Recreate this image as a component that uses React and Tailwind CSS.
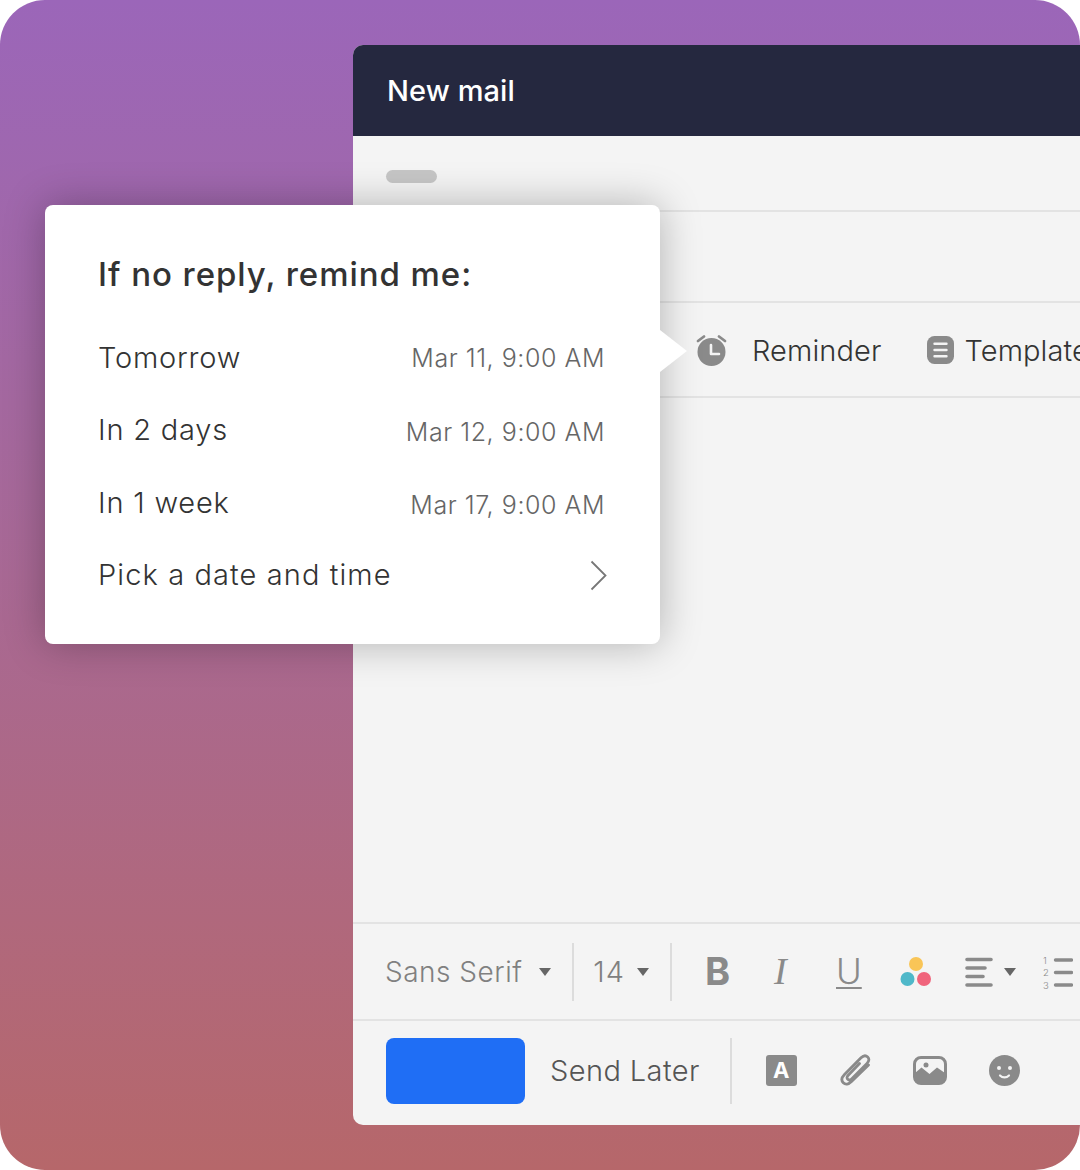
const font = { fontFamily: 'Inter, sans-serif' };

function Caret({ className = '' }) {
    return <span className={`block shrink-0 w-0 h-0 border-x-[6px] border-x-transparent border-t-[8px] border-t-[#666] ${className}`} />;
}

function ReminderRow({ label, date, dateClass = '' }) {
    return (
        <div className="flex items-center justify-between h-[72.5px]">
            <span className="text-[29px] font-light text-[#333] tracking-[0.8px]">{label}</span>
            <span className={`text-[25px] font-light text-[#666] tracking-[0.55px] ${dateClass}`}>{date}</span>
        </div>
    );
}

function AlarmIcon() {
    return (
        <svg width="32" height="32" viewBox="0 0 32 32" className="shrink-0">
            <circle cx="15.500" cy="18" r="14" fill="#8a8a8a" />
            <path d="M15 11v9h8" fill="none" stroke="#f4f4f4" strokeWidth="2.600" strokeLinecap="round" strokeLinejoin="round" />
            <path d="M2 7l6-4.500M29 7l-6-4.500" fill="none" stroke="#8a8a8a" strokeWidth="2.800" strokeLinecap="round" />
        </svg>
    );
}

function TemplateIcon() {
    return (
        <svg width="27" height="28" viewBox="0 0 27 28" className="shrink-0">
            <rect x="0" y="0" width="27" height="28" rx="7.500" fill="#8a8a8a" />
            <path d="M7.500 7.700h12M7.500 14h12M7.500 20.300h12" stroke="#f4f4f4" strokeWidth="2.400" strokeLinecap="round" />
        </svg>
    );
}

function ColorDots() {
    return (
        <svg width="32" height="30" viewBox="0 0 32 30" className="shrink-0">
            <circle cx="16" cy="7" r="7" fill="#f9c557" />
            <circle cx="7.500" cy="22" r="7" fill="#4fb8c9" />
            <circle cx="24" cy="22" r="7" fill="#f0647c" />
        </svg>
    );
}

function AlignIcon() {
    return (
        <svg width="28" height="30" viewBox="0 0 28 30" className="shrink-0">
            <path d="M2 2.500h24M2 11h18M2 19.500h16M2 28h24" stroke="#8a8a8a" strokeWidth="3.600" strokeLinecap="round" />
        </svg>
    );
}

function ListIcon() {
    return (
        <svg width="30" height="34" viewBox="0 0 30 34" className="shrink-0">
            <path d="M12.500 5h16M12.500 17.500h16M12.500 30h16" stroke="#8a8a8a" strokeWidth="3.400" strokeLinecap="round" />
            <text x="0" y="8.500" fontSize="9.500" fontWeight="300" fill="#8a8a8a" fontFamily="Inter, sans-serif">1</text>
            <text x="0" y="21" fontSize="9.500" fontWeight="300" fill="#8a8a8a" fontFamily="Inter, sans-serif">2</text>
            <text x="0" y="33.500" fontSize="9.500" fontWeight="300" fill="#8a8a8a" fontFamily="Inter, sans-serif">3</text>
        </svg>
    );
}

function ClipIcon() {
    return (
        <svg width="31" height="33" viewBox="0 0 31 33" className="shrink-0">
            <path d="M19.500 9.500L8 21.500c-1.300 1.400-1.200 2.900-.2 3.800 1 1 2.500.9 3.800-.4L27 9.500c2.300-2.400 2.400-5 .7-6.600-1.800-1.700-4.300-1.500-6.700.9L4.500 20.500c-3 3.100-3.200 6.300-1.200 8.300 2.100 2.100 5.200 1.800 8.200-1.200L28.500 11" fill="none" stroke="#8a8a8a" strokeWidth="2.800" strokeLinecap="round" strokeLinejoin="round" />
        </svg>
    );
}

function ImageIcon() {
    return (
        <svg width="34" height="29" viewBox="0 0 34 29" className="shrink-0">
            <rect x="1.500" y="1.500" width="31" height="26" rx="6.500" fill="#f4f4f4" stroke="#8a8a8a" strokeWidth="3" />
            <path d="M2 17l6.500-5.500 8 6.500 7.500-6.500 8 5.500v5c0 3.500-2.500 5.500-6 5.500H8c-3.500 0-6-2-6-5.500z" fill="#8a8a8a" />
            <circle cx="13" cy="9" r="2.500" fill="#8a8a8a" />
        </svg>
    );
}

function SmileIcon() {
    return (
        <svg width="31" height="31" viewBox="0 0 31 31" className="shrink-0">
            <circle cx="15.500" cy="15.500" r="15.500" fill="#8a8a8a" />
            <circle cx="10" cy="13" r="2" fill="#f4f4f4" />
            <circle cx="21" cy="13" r="2" fill="#f4f4f4" />
            <path d="M11 20.500c2.500 2.500 6.500 2.500 9 0" fill="none" stroke="#f4f4f4" strokeWidth="2.200" strokeLinecap="round" />
        </svg>
    );
}

export default function App() {
    return (
        <div style={font} className="relative w-[1080px] h-[1170px] overflow-hidden bg-white">
            <div className="w-full h-full rounded-[45px] bg-gradient-to-b from-[#9b66b9] to-[#b6676a] pt-[45px] pb-[45px] pl-[353px]">
                <div className="h-full flex flex-col rounded-l-[10px] overflow-hidden bg-[#f4f4f4]">
                    <div className="h-[91px] shrink-0 flex items-center pl-[34px] bg-[#25283f]">
                        <span className="text-[29px] font-medium text-white tracking-[0.1px]">New mail</span>
                    </div>
                    <div className="h-[76px] shrink-0 flex items-center pl-[33px] pt-[7px] border-b-2 border-[#e3e3e3]">
                        <div className="w-[51px] h-[13px] rounded-full bg-[#c6c6c6]" />
                    </div>
                    <div className="h-[91px] shrink-0 border-b-2 border-[#e3e3e3]" />
                    <div className="h-[95px] shrink-0 flex items-center pl-[343px] border-b-2 border-[#e3e3e3] whitespace-nowrap">
                        <AlarmIcon />
                        <span className="ml-[24px] pt-[2px] text-[29px] font-light text-[#333] tracking-[0.1px]">Reminder</span>
                        <span className="ml-[46px] shrink-0"><TemplateIcon /></span>
                        <span className="ml-[10px] pt-[2px] text-[29px] font-light text-[#333] tracking-[0.1px]">Template</span>
                    </div>
                    <div className="flex-1" />
                    <div className="h-[99px] shrink-0 flex items-center pl-[32px] border-y-2 border-[#e3e3e3] whitespace-nowrap">
                        <span className="shrink-0 text-[28px] font-light text-[#808080] tracking-[0.5px]">Sans Serif</span>
                        <Caret className="ml-[17px]" />
                        <div className="shrink-0 ml-[21px] w-[2px] h-[58px] bg-[#dcdcdc]" />
                        <span className="shrink-0 ml-[19px] text-[29px] font-light text-[#808080] tracking-[1px]">14</span>
                        <Caret className="ml-[12px]" />
                        <div className="shrink-0 ml-[21px] w-[2px] h-[58px] bg-[#dcdcdc]" />
                        <span className="shrink-0 ml-[33px] w-[43px] text-[38px] font-bold text-[#8a8a8a]">B</span>
                        <span className="shrink-0 ml-[26px] w-[36px] text-[38px] text-[#8a8a8a]" style={{ fontFamily: '"Liberation Serif", serif', fontStyle: 'italic' }}>I</span>
                        <span className="shrink-0 ml-[26px] w-[27px] text-[35px] font-light text-[#8a8a8a] underline underline-offset-[3px] decoration-2">U</span>
                        <span className="shrink-0 ml-[37px]"><ColorDots /></span>
                        <span className="shrink-0 ml-[33px]"><AlignIcon /></span>
                        <Caret className="ml-[11px]" />
                        <span className="shrink-0 ml-[27px]"><ListIcon /></span>
                    </div>
                    <div className="flex-none h-[104px] flex items-center pl-[33px] pb-[5px] whitespace-nowrap">
                        <div className="shrink-0 w-[139px] h-[66px] rounded-[8px] bg-[#1f6ef5]" />
                        <span className="shrink-0 ml-[25px] text-[29px] font-light text-[#555] tracking-[0.4px]">Send Later</span>
                        <div className="shrink-0 ml-[30px] w-[2px] h-[66px] bg-[#dcdcdc]" />
                        <div className="shrink-0 ml-[34px] w-[31px] h-[31px] rounded-[3px] bg-[#8a8a8a] flex items-center justify-center text-white font-bold text-[22px]">A</div>
                        <span className="shrink-0 ml-[43px]"><ClipIcon /></span>
                        <span className="shrink-0 ml-[42px]"><ImageIcon /></span>
                        <span className="shrink-0 ml-[42px]"><SmileIcon /></span>
                    </div>
                </div>
            </div>

            {/* reminder popover */}
            <div className="absolute left-[45px] top-[205px] w-[615px] h-[439px] rounded-[8px] bg-white shadow-[0_0_40px_rgba(0,0,0,0.28)] pt-[47px] px-[53px]">
                <div className="text-[33px] font-medium text-[#333] leading-[44px] mb-[25px] tracking-[0.95px]">If no reply, remind me:</div>
                <div className="mr-[2px]">
                    <ReminderRow label="Tomorrow" date="Mar 11, 9:00 AM" dateClass="mt-[2px]" />
                    <ReminderRow label="In 2 days" date="Mar 12, 9:00 AM" dateClass="mt-[6px]" />
                    <ReminderRow label="In 1 week" date="Mar 17, 9:00 AM" dateClass="mt-[6px]" />
                    <div className="flex items-center justify-between h-[72.5px]">
                        <span className="text-[29px] font-light text-[#333] tracking-[1.1px]">Pick a date and time</span>
                        <svg width="17" height="31" viewBox="0 0 17 31" className="shrink-0 -mr-[2px] mt-[2px]">
                            <path d="M1.500 1.500L15.500 15.500L1.500 29.500" fill="none" stroke="#777" strokeWidth="1.800" />
                        </svg>
                    </div>
                </div>
                <div className="absolute left-full top-[125px] w-0 h-0 border-y-[21px] border-y-transparent border-l-[27px] border-l-white" />
            </div>
        </div>
    );
}
